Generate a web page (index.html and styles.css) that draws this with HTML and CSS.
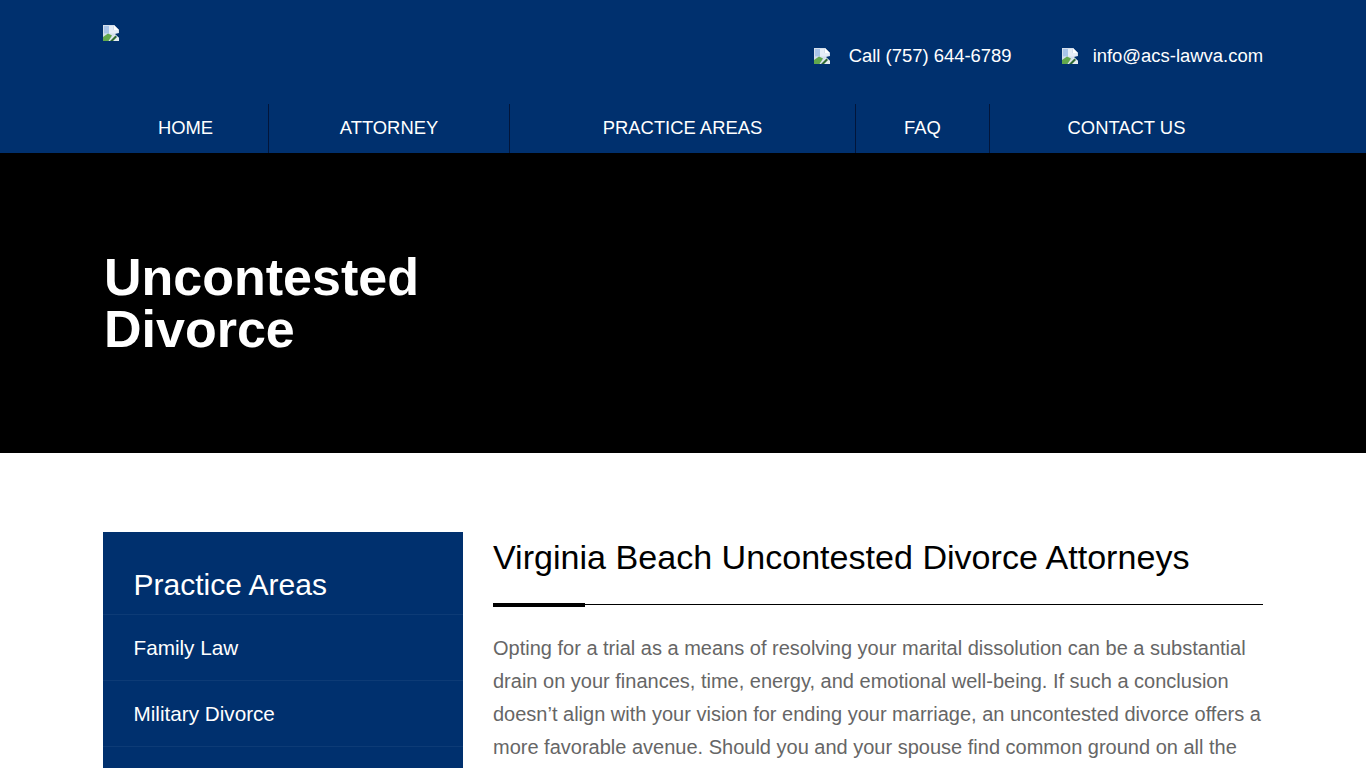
FILE: index.html
```html
<!DOCTYPE html>
<html lang="en">

<head>
    <meta charset="UTF-8">
    <meta name="viewport" content="width=device-width, initial-scale=1.0">
    <title>Uncontested Divorce</title>
    <link rel="stylesheet" href="styles.css">
</head>

<body>
    <svg class="sprite" width="0" height="0">
        <symbol id="broken" viewBox="0 0 16 16">
            <path d="M0 0H11L16 5V8L12 9L16 13V16H0Z" fill="#d5dfeb" />
            <path d="M11 0L16 5H11Z" fill="#fff" />
            <path d="M1 1H10V5H15V7.500L11 8.500H1Z" fill="#e6edf7" />
            <path d="M1 1H6V8.500H1Z" fill="#a9c4e8" />
            <path d="M0 16V12L5 8.500L9 10.500L5.500 16Z" fill="#62a84c" />
            <path d="M6 16L12 9.500L16 13V16Z" fill="#e6edf0" />
            <path d="M7 16L12.500 10.500L14 12L10 16Z" fill="#2f6a33" />
        </symbol>
    </svg>

    <div class="page">
        <header class="site-header">
            <div class="container">
                <div class="top-row">
                    <svg class="icon logo"><use href="#broken" /></svg>
                    <div class="contact">
                        <span class="contact-item contact-phone">
                            <svg class="icon"><use href="#broken" /></svg>
                            Call (757) 644-6789
                        </span>
                        <span class="contact-item contact-mail">
                            <svg class="icon"><use href="#broken" /></svg>
                            info@acs-lawva.com
                        </span>
                    </div>
                </div>
                <nav class="main-nav">
                    <a href="#">HOME</a>
                    <a href="#">ATTORNEY</a>
                    <a href="#">PRACTICE AREAS</a>
                    <a href="#">FAQ</a>
                    <a href="#">CONTACT US</a>
                </nav>
            </div>
        </header>

        <section class="hero">
            <div class="container">
                <h1>Uncontested<br>Divorce</h1>
            </div>
        </section>

        <main class="container content">
            <aside class="sidebar">
                <h3>Practice Areas</h3>
                <a href="#">Family Law</a>
                <a href="#">Military Divorce</a>
            </aside>
            <article class="article">
                <h2>Virginia Beach Uncontested Divorce Attorneys</h2>
                <div class="rule"></div>
                <p>Opting for a trial as a means of resolving your marital dissolution can be a substantial drain on your finances, time, energy, and emotional well-being. If such a conclusion doesn’t align with your vision for ending your marriage, an uncontested divorce offers a more favorable avenue. Should you and your spouse find common ground on all the</p>
            </article>
        </main>
    </div>
</body>

</html>
```

FILE: styles.css
```css
body {
    font-family: "Liberation Sans", Arial, sans-serif;
    margin: 0;
    padding: 0;
}

.sprite {
    display: block;
}

.page {
    height: 768px;
    overflow: hidden;
}

.container {
    width: 1160px;
    margin: 0 auto;
}

.site-header {
    background-color: #00306e;
    color: #fff;
}

.top-row {
    display: flex;
    justify-content: space-between;
    height: 104px;
}

.icon {
    display: block;
    width: 16px;
    height: 16px;
}

.logo {
    margin-top: 25px;
}

.contact {
    display: flex;
    height: 24px;
    margin-top: 44px;
    font-size: 18.45px;
    line-height: 24px;
}

.contact-item {
    display: flex;
    align-items: center;
}

.contact-phone {
    gap: 19px;
    margin-right: 50px;
}

.contact-mail {
    gap: 15px;
}

.main-nav {
    display: grid;
    grid-template-columns: 166px 241px 346px 134px 273px;
    height: 49px;
}

.main-nav a {
    color: #fff;
    font-size: 18.4px;
    line-height: 47px;
    text-align: center;
    text-decoration: none;
    border-right: 1px solid #02153a;
}

.main-nav a:last-child {
    border-right: 0;
}

.hero {
    display: flex;
    align-items: center;
    height: 300px;
    background-color: #000;
    color: #fff;
}

.hero h1 {
    margin: 0 0 0 1px;
    font-size: 52px;
    line-height: 52px;
}

.content {
    display: flex;
    gap: 30px;
    padding-top: 79px;
}

.sidebar {
    flex: 0 0 360px;
    min-height: 300px;
    background-color: #00306e;
    color: #fff;
}

.sidebar h3 {
    margin: 0;
    padding: 35px 30px 12px 30.5px;
    font-size: 30px;
    font-weight: 400;
    line-height: 35px;
    border-bottom: 1px solid #0d3b76;
}

.sidebar a {
    display: block;
    padding: 0 30px 0 30.5px;
    color: #fff;
    font-size: 20.7px;
    line-height: 65px;
    text-decoration: none;
    border-bottom: 1px solid #0d3b76;
}

.article {
    flex: 1;
}

.article h2 {
    margin: 0;
    color: #000;
    font-size: 34.1px;
    font-weight: 400;
    line-height: 50px;
}

.rule {
    height: 1px;
    margin-top: 22px;
    background-color: #000;
    position: relative;
}

.rule::before {
    content: "";
    position: absolute;
    left: 0;
    top: -1px;
    width: 92px;
    height: 4px;
    background-color: #000;
}

.article p {
    margin: 27px 0 0;
    color: #666;
    font-size: 20px;
    line-height: 33px;
}
```
